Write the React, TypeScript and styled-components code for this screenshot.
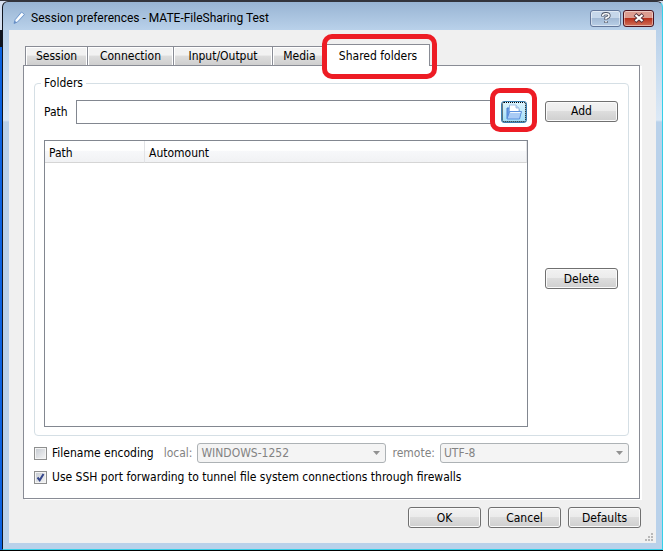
import React from 'react';
import styled, { createGlobalStyle, css } from 'styled-components';

const Global = createGlobalStyle`
  * { box-sizing: border-box; }
  html, body { margin: 0; height: 100%; }
  #root { min-height: 100%; display: flex; }
  body, button, input, select {
    font-family: "DejaVu Sans Condensed", "DejaVu Sans", sans-serif;
    font-stretch: condensed;
    font-size: 12px;
    line-height: 16px;
    color: #000;
  }
`;

const Desktop = styled.div`
  flex: 1;
  display: flex;
  min-height: 100vh;
  padding: 1px 0 1px 2px;
  background:
    linear-gradient(#000, #000) bottom / 100% 1px no-repeat,
    linear-gradient(to bottom, #33343c 0 1px, #d6e0f0 1px 30px, #10151f 30px 47px, #0a62e0 47px 100%);
`;

const Window = styled.div`
  flex: 1;
  display: flex;
  flex-direction: column;
  padding: 0 6px 6px 6px;
  border: 1px solid;
  border-color: #33343c #35cfe8 #35cfe8 #10151f;
  border-radius: 6px 6px 0 0;
  background: linear-gradient(to bottom, #98b4d3 0, #b9d1ea 28px, #dce9f6 118px, #b9d1ea 120px);
`;

const TitleBar = styled.header`
  height: 28px;
  display: flex;
  align-items: center;
  gap: 2px;
  padding: 4px 2px 0 2px;
`;

const Title = styled.h1`
  flex: 1;
  margin: 0 0 0 2px;
  font-family: Roboto, "Noto Sans", sans-serif;
  font-size: 12px;
  font-weight: 400;
  font-stretch: normal;
`;

const CaptionButton = styled.button<{ $danger?: boolean }>`
  width: 31px;
  height: 17px;
  padding: 0;
  display: flex;
  align-items: center;
  justify-content: center;
  border: 1px solid #63779a;
  border-radius: 3px;
  box-shadow: inset 0 0 0 1px rgba(255, 255, 255, 0.45);
  background: linear-gradient(#c6d7ea 0 45%, #a3bad5 50%, #b9cfe7);
  ${p => p.$danger && css`
    border-color: #4b1420;
    background: linear-gradient(#dc9c90 0 45%, #b8301c 50%, #d0705a);
  `}
`;

const Client = styled.main`
  flex: 1;
  display: flex;
  flex-direction: column;
  padding: 14px 15px 1px 14px;
  background: #f0f0f0;
`;

const Tabs = styled.nav`
  display: flex;
  align-items: flex-end;
  height: 21px;
  padding-left: 2px;
`;

const Callout = css`
  position: relative;
  &::after {
    content: "";
    position: absolute;
    border: 5px solid #ed1c24;
    border-radius: 10px;
    pointer-events: none;
  }
`;

const Tab = styled.button<{ $width: number; $active?: boolean }>`
  width: ${p => p.$width}px;
  height: 19px;
  padding: 0;
  text-align: center;
  white-space: nowrap;
  border: 1px solid #898c95;
  border-width: 1px 0 0 1px;
  box-shadow: inset 1px 1px 0 #fff, inset -1px 0 0 #fff;
  background: linear-gradient(#f2f2f2 0 45%, #dddddd 50%, #cfcfcf);
  ${p => p.$active && css`
    ${Callout}
    height: 22px;
    margin-bottom: -1px;
    border-width: 1px 1px 0 1px;
    background: #fff;
    &::after { inset: -11px -8px -13px -5px; }
  `}
`;

const Panel = styled.section`
  flex: 1;
  display: flex;
  flex-direction: column;
  margin-right: 1px;
  padding: 9px 10px 11px 10px;
  border: 1px solid #898c95;
  box-shadow: 2px 1px 0 #fff;
  background: #fff;
`;

const Group = styled.fieldset`
  flex: 1;
  display: flex;
  flex-direction: column;
  min-width: 0;
  margin: 0 0 3px;
  padding: 9px 10px 8px 9px;
  border: 1px solid #d5dfe5;
  border-radius: 4px;
`;

const Legend = styled.legend`
  margin-left: -3px;
  padding: 0 3px;
`;

const GroupBody = styled.div`
  flex: 1;
  display: grid;
  grid-template-columns: 1fr 73px;
  grid-template-rows: 24px 1fr;
  gap: 16px 17px;
`;

const PathRow = styled.div`
  display: flex;
  align-items: center;
  gap: 8px;
  padding-right: 1px;
`;

const PathInput = styled.input`
  flex: 1;
  min-width: 0;
  height: 24px;
  padding: 0 4px;
  border: 1px solid #828790;
  background: #fff;
`;

const BrowseButton = styled.button`
  ${Callout}
  width: 26px;
  height: 22px;
  padding: 1px;
  display: flex;
  align-items: center;
  justify-content: center;
  border: 1px solid #3c7fb1;
  border-radius: 3px;
  outline: 1px dotted #000;
  outline-offset: -2px;
  background: linear-gradient(#dff4fc, #a0def8);
  &::after { inset: -14px -11px -10px -12px; }
`;

const SideCell = styled.div`
  display: flex;
  align-items: center;
  padding-bottom: 2px;
`;

const SideColumn = styled(SideCell)`
  padding-bottom: 10px;
`;

const PushButton = styled.button`
  width: 73px;
  height: 21px;
  padding: 0;
  border: 1px solid #707070;
  border-radius: 3px;
  box-shadow: inset 0 0 0 1px #fafafa;
  background: linear-gradient(#f2f2f2 0, #ebebeb 48%, #dddddd 50%, #cfcfcf);
`;

const ListFrame = styled.div`
  border: 1px solid #828790;
  background: #fff;
`;

const List = styled.table`
  width: 100%;
  table-layout: fixed;
  border-collapse: separate;
  border-spacing: 0;
`;

const HeadCell = styled.th<{ $narrow?: boolean }>`
  width: ${p => (p.$narrow ? '100px' : 'auto')};
  height: 22px;
  padding: 2px 4px 0;
  text-align: left;
  font-weight: 400;
  border-right: 1px solid #e2e3e6;
  border-bottom: 1px solid #d5d5d5;
  background: linear-gradient(#fff 0 45%, #f7f8fa 46%, #f1f2f4);
`;

const Options = styled.div`
  display: flex;
  align-items: center;
  gap: 6px;
  height: 20px;
  margin-top: 4px;
`;

const Check = styled.label`
  display: flex;
  align-items: center;
  gap: 5px;
  padding-right: 4px;
`;

const Box = styled.input`
  appearance: none;
  width: 13px;
  height: 13px;
  margin: 0;
  border: 1px solid #8e8f8f;
  box-shadow: inset 0 0 0 1px #f4f4f4;
  background: linear-gradient(135deg, #c4c9d0, #f6f6f6);
  &:checked {
    background: url("data:image/svg+xml,%3Csvg xmlns='http://www.w3.org/2000/svg' viewBox='0 0 11 11'%3E%3Cpath d='M2.5 5.5L4.7 8.2L8.5 2' fill='none' stroke='%2335478c' stroke-width='2'/%3E%3C/svg%3E"),
      linear-gradient(135deg, #c4c9d0, #f6f6f6);
  }
`;

const Encoding = styled.label`
  flex: 1 1 auto;
  display: flex;
  align-items: center;
  gap: 5px;
  color: #838383;
`;

const Select = styled.select`
  appearance: none;
  flex: 1;
  width: 0;
  min-width: 0;
  height: 20px;
  padding: 0 3px;
  border: 1px solid #adb2b5;
  border-radius: 3px;
  color: #838383;
  opacity: 1;
  background: #f4f4f4 url("data:image/svg+xml,%3Csvg xmlns='http://www.w3.org/2000/svg' width='7' height='4'%3E%3Cpath d='M0 0h7L3.500 4z' fill='%23919191'/%3E%3C/svg%3E") no-repeat right 5px center;
`;

const Footer = styled.footer`
  display: flex;
  justify-content: flex-end;
  gap: 7px;
  margin-top: 8px;
`;

const GripRow = styled.div`
  display: flex;
  justify-content: flex-end;
  margin: 5px -12px 0 0;
`;

const PencilIcon = () => (
  <svg width="16" height="16" viewBox="0 0 16 16" aria-hidden="true">
    <path d="M3 13.500L4 9.800L10.500 2L13.500 4.500L6.500 12Z" fill="#e9f3fd" stroke="#6f97cc" strokeWidth="1" />
    <path d="M5.500 10.500L11.500 3.600" stroke="#fff" strokeWidth="1.400" />
    <path d="M3 13.500L4 11L5.500 12.300Z" fill="#5b83bd" />
  </svg>
);

const HelpIcon = () => (
  <svg width="10" height="12" viewBox="0 0 10 12" aria-hidden="true">
    <path d="M1.800 4.500V3.500Q1.800 1.700 5 1.700T8 3.700Q8 5 5 6V8M5 9V11" fill="none" stroke="#4a5060" strokeWidth="3.200" />
    <path d="M1.800 4V3.500Q1.800 1.700 5 1.700T8 3.700Q8 5 5 6V7.500M5 9V10.500" fill="none" stroke="#fff" strokeWidth="1.600" />
  </svg>
);

const CloseIcon = () => (
  <svg width="12" height="10" viewBox="0 0 12 10" aria-hidden="true">
    <path d="M2 1.500L10 8.500M10 1.500L2 8.500" stroke="#53303a" strokeWidth="4" />
    <path d="M2.500 2L9.500 8M9.500 2L2.500 8" stroke="#fff" strokeWidth="2.300" />
  </svg>
);

const FolderIcon = () => (
  <svg width="18" height="16" viewBox="0 0 16 16" aria-hidden="true">
    <path d="M1 14.500V4H4.500L5.500 5.500H13V14.500Z" fill="#6a9fe6" stroke="#4a80d0" />
    <path d="M3.500 10V1H10L13 4V10Z" fill="#fff" stroke="#8db4e2" strokeWidth="0.800" />
    <path d="M10 1V4H13" fill="#c9dcf6" stroke="#8db4e2" strokeWidth="0.800" />
    <path d="M1 15L3.500 7.500H15.500L13.500 15Z" fill="#a9cbf5" stroke="#5b8fdc" />
    <path d="M4.200 8.500H14.500" stroke="#eef7ff" />
  </svg>
);

const Grip = () => (
  <svg width="9" height="9" viewBox="0 0 9 9" aria-hidden="true">
    <path d="M7 1h2M4 4h2M7 4h2M1 7h2M4 7h2M7 7h2" stroke="#b8b8b8" strokeWidth="2" />
  </svg>
);

const tabs = [
  { name: 'Session', width: 62 },
  { name: 'Connection', width: 86 },
  { name: 'Input/Output', width: 99 },
  { name: 'Media', width: 54 },
  { name: 'Shared folders', width: 104, active: true },
];

export default function App() {
  return (
    <Desktop>
      <Global />
      <Window>
        <TitleBar>
          <PencilIcon />
          <Title>Session preferences - MATE-FileSharing Test</Title>
          <CaptionButton aria-label="Help"><HelpIcon /></CaptionButton>
          <CaptionButton $danger aria-label="Close"><CloseIcon /></CaptionButton>
        </TitleBar>
        <Client>
          <Tabs role="tablist">
            {tabs.map(tab => (
              <Tab key={tab.name} role="tab" aria-selected={!!tab.active} $width={tab.width} $active={tab.active}>
                {tab.name}
              </Tab>
            ))}
          </Tabs>
          <Panel role="tabpanel">
            <Group>
              <Legend>Folders</Legend>
              <GroupBody>
                <PathRow>
                  <label htmlFor="path">Path</label>
                  <PathInput id="path" type="text" />
                  <BrowseButton aria-label="Browse for folder"><FolderIcon /></BrowseButton>
                </PathRow>
                <SideCell><PushButton>Add</PushButton></SideCell>
                <ListFrame>
                  <List>
                    <thead>
                      <tr>
                        <HeadCell $narrow>Path</HeadCell>
                        <HeadCell>Automount</HeadCell>
                      </tr>
                    </thead>
                    <tbody />
                  </List>
                </ListFrame>
                <SideColumn><PushButton>Delete</PushButton></SideColumn>
              </GroupBody>
            </Group>
            <Options>
              <Check><Box type="checkbox" />Filename encoding</Check>
              <Encoding>
                local:
                <Select disabled defaultValue="WINDOWS-1252"><option>WINDOWS-1252</option></Select>
              </Encoding>
              <Encoding>
                remote:
                <Select disabled defaultValue="UTF-8"><option>UTF-8</option></Select>
              </Encoding>
            </Options>
            <Options>
              <Check>
                <Box type="checkbox" defaultChecked />
                Use SSH port forwarding to tunnel file system connections through firewalls
              </Check>
            </Options>
          </Panel>
          <Footer>
            <PushButton>OK</PushButton>
            <PushButton>Cancel</PushButton>
            <PushButton>Defaults</PushButton>
          </Footer>
          <GripRow><Grip /></GripRow>
        </Client>
      </Window>
    </Desktop>
  );
}
